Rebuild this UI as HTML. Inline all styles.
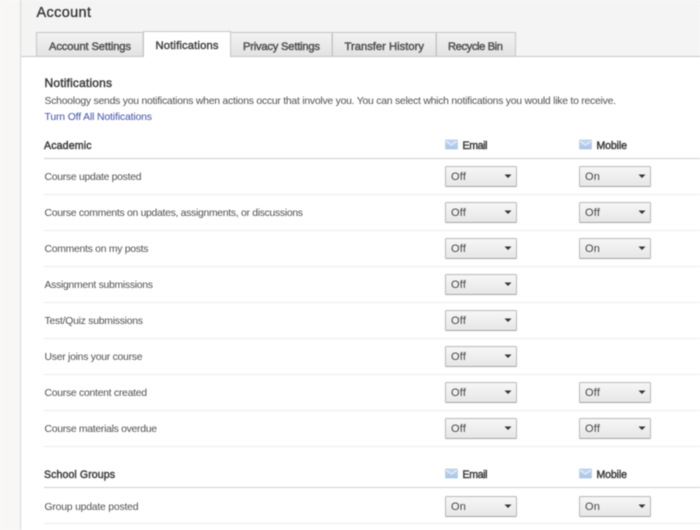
<!DOCTYPE html>
<html><head><meta charset="utf-8"><style>
html,body{margin:0;padding:0;width:700px;height:530px;overflow:hidden;background:#fff}
svg{display:block;font-family:"Liberation Sans",sans-serif;fill:#505050;filter:blur(.4px)}
text{font-size:10.4px}
.b{font-size:10.6px;fill:#3c3c3c;stroke:#3c3c3c;stroke-width:.45px}
.t{font-size:11.2px;fill:#505050;stroke:#505050;stroke-width:.45px}
.s{fill:url(#g);stroke:#b8b8b8;stroke-width:1}
.o{font-size:11px;fill:#444;letter-spacing:.2px}
</style></head><body>
<svg width="700" height="530" viewBox="0 0 700 530" xmlns="http://www.w3.org/2000/svg">
<defs>
<linearGradient id="g" x1="0" y1="0" x2="0" y2="1"><stop offset="0" stop-color="#f7f7f7"/><stop offset="1" stop-color="#e6e6e6"/></linearGradient>
<linearGradient id="tg" x1="0" y1="0" x2="0" y2="1"><stop offset="0" stop-color="#f3f3f3"/><stop offset="1" stop-color="#e2e2e2"/></linearGradient>
<linearGradient id="m" x1="0" y1="0" x2="0" y2="1"><stop offset="0" stop-color="#c4d8f0"/><stop offset="1" stop-color="#a9c6e8"/></linearGradient>
<g id="sel"><rect class="s" x="0.500" y="0.500" width="71" height="20" rx="1"/><path d="M0.500 20.500h71" stroke="#a4a4a4" fill="none"/><path d="M59.500 8.500h7l-3.500 3.500z" fill="#333"/></g>
<g id="env"><rect x="0" y="0" width="12" height="9" fill="url(#m)" stroke="#a8c4e4" stroke-width=".6"/><path d="M0.500 1l5.500 4 5.500-4" fill="none" stroke="#f2f6fb" stroke-width="1"/></g>
</defs>
<rect width="700" height="530" fill="#fff"/>
<rect width="20" height="530" fill="#f8f7f5"/>
<rect x="21" width="679" height="56" fill="#f4f4f4"/>
<rect x="20" width="1.200" height="530" fill="#dcdcdc"/>
<rect x="21" y="56" width="679" height="1" fill="#c8c8c8"/>
<text x="36.500" y="17" style="font-size:14.500px;fill:#333;stroke:#333;stroke-width:.3px" textLength="54.500">Account</text>

<rect x="36.500" y="32.500" width="106.500" height="24" fill="url(#tg)" stroke="#c6c6c6"/>
<rect x="230.500" y="32.500" width="101.500" height="24" fill="url(#tg)" stroke="#c6c6c6"/>
<rect x="332.500" y="32.500" width="103.500" height="24" fill="url(#tg)" stroke="#c6c6c6"/>
<rect x="436.500" y="32.500" width="79" height="24" fill="url(#tg)" stroke="#c6c6c6"/>
<path d="M143.500 57V31.500H230.500V57" fill="#fff" stroke="#c6c6c6"/>
<text class="t" x="49" y="50" textLength="82">Account Settings</text>
<text class="t" x="155.500" y="49" textLength="63" style="fill:#444;stroke:#444">Notifications</text>
<text class="t" x="243" y="50" textLength="77">Privacy Settings</text>
<text class="t" x="344.500" y="50" textLength="79.500">Transfer History</text>
<text class="t" x="448" y="50" textLength="55">Recycle Bin</text>

<text class="b" x="44.500" y="87" style="font-size:12px" textLength="67.500">Notifications</text>
<text x="44.500" y="104" textLength="571.500">Schoology sends you notifications when actions occur that involve you. You can select which notifications you would like to receive.</text>
<text x="44.500" y="120" style="fill:#3f51a8" textLength="107.500">Turn Off All Notifications</text>

<text class="b" x="44" y="149" textLength="47.500">Academic</text>
<use href="#env" x="445.500" y="140"/><text class="b" x="462.500" y="149" textLength="25">Email</text>
<use href="#env" x="579.500" y="140"/><text class="b" x="596.500" y="149" textLength="30.500">Mobile</text>
<rect x="44" y="158" width="656" height="1" fill="#cfcfcf"/>

<text x="44.500" y="180" textLength="97">Course update posted</text>
<use href="#sel" x="445" y="166"/><text class="o" x="451" y="180">Off</text>
<use href="#sel" x="579" y="166"/><text class="o" x="585" y="180">On</text>
<rect x="44" y="194" width="656" height="1" fill="#ececec"/>

<text x="44.500" y="216" textLength="258.500">Course comments on updates, assignments, or discussions</text>
<use href="#sel" x="445" y="202"/><text class="o" x="451" y="216">Off</text>
<use href="#sel" x="579" y="202"/><text class="o" x="585" y="216">Off</text>
<rect x="44" y="230" width="656" height="1" fill="#ececec"/>

<text x="44.500" y="252" textLength="104">Comments on my posts</text>
<use href="#sel" x="445" y="238"/><text class="o" x="451" y="252">Off</text>
<use href="#sel" x="579" y="238"/><text class="o" x="585" y="252">On</text>
<rect x="44" y="266" width="656" height="1" fill="#ececec"/>

<text x="44.500" y="288" textLength="108.500">Assignment submissions</text>
<use href="#sel" x="445" y="274"/><text class="o" x="451" y="288">Off</text>
<rect x="44" y="302" width="656" height="1" fill="#ececec"/>

<text x="44.500" y="324" textLength="98.500">Test/Quiz submissions</text>
<use href="#sel" x="445" y="310"/><text class="o" x="451" y="324">Off</text>
<rect x="44" y="338" width="656" height="1" fill="#ececec"/>

<text x="44.500" y="360" textLength="98">User joins your course</text>
<use href="#sel" x="445" y="346"/><text class="o" x="451" y="360">Off</text>
<rect x="44" y="374" width="656" height="1" fill="#ececec"/>

<text x="44.500" y="396" textLength="102.500">Course content created</text>
<use href="#sel" x="445" y="382"/><text class="o" x="451" y="396">Off</text>
<use href="#sel" x="579" y="382"/><text class="o" x="585" y="396">Off</text>
<rect x="44" y="410" width="656" height="1" fill="#ececec"/>

<text x="44.500" y="432" textLength="112.500">Course materials overdue</text>
<use href="#sel" x="445" y="418"/><text class="o" x="451" y="432">Off</text>
<use href="#sel" x="579" y="418"/><text class="o" x="585" y="432">Off</text>
<rect x="44" y="446" width="656" height="1" fill="#ececec"/>

<text class="b" x="44" y="478" textLength="71">School Groups</text>
<use href="#env" x="445.500" y="469"/><text class="b" x="462.500" y="478" textLength="25">Email</text>
<use href="#env" x="579.500" y="469"/><text class="b" x="596.500" y="478" textLength="30.500">Mobile</text>
<rect x="44" y="487" width="656" height="1" fill="#cfcfcf"/>

<text x="44.500" y="510" textLength="94">Group update posted</text>
<use href="#sel" x="445" y="496"/><text class="o" x="451" y="510">On</text>
<use href="#sel" x="579" y="496"/><text class="o" x="585" y="510">On</text>
<rect x="44" y="523" width="656" height="1" fill="#ececec"/>
</svg>
</body></html>
